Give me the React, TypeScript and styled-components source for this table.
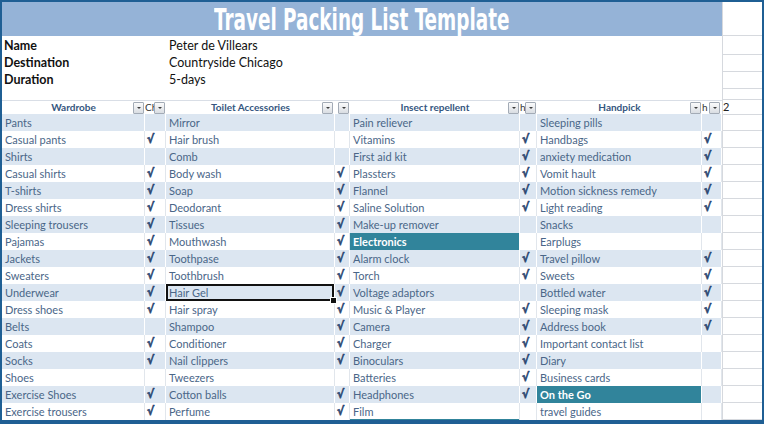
import React from "react";
import styled, { createGlobalStyle, css } from "styled-components";

const GlobalStyle = createGlobalStyle`
  html, body { margin: 0; padding: 0; background: #ffffff; }
  body { font-family: Lato, "Liberation Sans", sans-serif; }
`;

const COLS = "143px 21px 169px 15px 170px 17px 165px 20px 40px";
const GRIDLINE = "#d6d9de";
const BAND = "#dce6f1";
const TEAL = "#31849b";
const TEXT = "#4a6688";

const Frame = styled.div`
  width: 764px;
  height: 424px;
  box-sizing: border-box;
  border: 2px solid #1f5f94;
  border-bottom-width: 4px;
  display: flex;
  flex-direction: column;
  overflow: hidden;
  background: #ffffff;
`;

const Row = styled.div<{ $h: number }>`
  display: grid;
  grid-template-columns: ${COLS};
  height: ${(p) => p.$h}px;
  flex: none;
`;

const TitleBar = styled.div`
  grid-column: 1 / 9;
  background: #95b3d7;
  display: flex;
  align-items: center;
  justify-content: center;
  overflow: hidden;
`;

const TitleText = styled.h1`
  margin: 0;
  color: #ffffff;
  font-family: "DejaVu Sans Condensed", "DejaVu Sans", sans-serif;
  font-weight: bold;
  font-size: 31px;
  line-height: 34px;
  white-space: nowrap;
  transform: scaleX(0.66);
`;

const Extra = styled.div`
  grid-column: 9;
  box-sizing: border-box;
  border-bottom: 1px solid ${GRIDLINE};
  border-left: 1px solid ${GRIDLINE};
  font-size: 11px;
  color: #222;
  line-height: 14px;
`;

const InfoLabel = styled.div`
  grid-column: 1 / 3;
  font-weight: bold;
  font-size: 12.5px;
  color: #111;
  padding-left: 2px;
  line-height: 19px;
  white-space: nowrap;
`;

const InfoValue = styled.div`
  grid-column: 3 / 9;
  font-size: 12.5px;
  color: #111;
  padding-left: 3px;
  line-height: 19px;
  white-space: nowrap;
`;

const Blank = styled.div`
  grid-column: 1 / 9;
`;

const HeadCell = styled.div<{ $narrow?: boolean }>`
  position: relative;
  box-sizing: border-box;
  border-top: 1px solid #d9dee6;
  overflow: hidden;
  white-space: nowrap;
  font-size: 10px;
  line-height: 13px;
  ${(p) =>
    p.$narrow
      ? css`
          color: #333;
          text-align: left;
        `
      : css`
          color: #355680;
          font-weight: bold;
          text-align: center;
        `}
`;

const DropButton = styled.span<{ $r: number }>`
  position: absolute;
  top: 1px;
  right: ${(p) => p.$r}px;
  width: 11px;
  height: 12px;
  box-sizing: border-box;
  border: 1px solid #a3abb6;
  border-radius: 1px;
  background: linear-gradient(#fbfbfb, #d9dde2);
  display: flex;
  align-items: center;
  justify-content: center;
  &::after {
    content: "";
    border-left: 2.5px solid transparent;
    border-right: 2.5px solid transparent;
    border-top: 2.5px solid #3c3c3c;
  }
`;

const ItemCell = styled.div<{ $band: boolean; $teal?: boolean; $sel?: boolean; $under?: boolean }>`
  position: relative;
  box-sizing: border-box;
  background: ${(p) => (p.$teal ? TEAL : p.$band ? BAND : "#ffffff")};
  border-right: 1px solid ${(p) => (p.$band || p.$teal ? "#ffffff" : "#e1e6ec")};
  color: ${(p) => (p.$teal ? "#ffffff" : TEXT)};
  font-weight: ${(p) => (p.$teal ? "bold" : "normal")};
  font-size: 11px;
  line-height: 17px;
  padding-left: 3px;
  white-space: nowrap;
  ${(p) =>
    p.$sel &&
    css`
      box-shadow: inset 0 0 0 2px #111;
      z-index: 1;
    `}
  ${(p) =>
    p.$under &&
    css`
      box-shadow: inset 0 -1px 0 ${TEAL};
    `}
`;

const FillHandle = styled.span`
  position: absolute;
  right: -3px;
  bottom: -3px;
  width: 5px;
  height: 5px;
  background: #111;
  border: 1px solid #fff;
`;

const CheckCell = styled.div<{ $band: boolean }>`
  box-sizing: border-box;
  background: ${(p) => (p.$band ? BAND : "#ffffff")};
  border-right: 1px solid ${(p) => (p.$band ? "#ffffff" : "#e1e6ec")};
  color: #2a4670;
  font-family: "DejaVu Sans Condensed", "DejaVu Sans", sans-serif;
  font-weight: bold;
  font-size: 12px;
  line-height: 17px;
  padding-left: 2px;
  overflow: hidden;
  -webkit-text-stroke: 0.6px #2a4670;
`;

type Item = [string, boolean];

const wardrobe: Item[] = [
  ["Pants", false],
  ["Casual pants", true],
  ["Shirts", false],
  ["Casual shirts", true],
  ["T-shirts", true],
  ["Dress shirts", true],
  ["Sleeping trousers", true],
  ["Pajamas", true],
  ["Jackets", true],
  ["Sweaters", true],
  ["Underwear", true],
  ["Dress shoes", true],
  ["Belts", false],
  ["Coats", true],
  ["Socks", true],
  ["Shoes", false],
  ["Exercise Shoes", true],
  ["Exercise trousers", true],
];

const toilet: Item[] = [
  ["Mirror", false],
  ["Hair brush", false],
  ["Comb", false],
  ["Body wash", true],
  ["Soap", true],
  ["Deodorant", true],
  ["Tissues", true],
  ["Mouthwash", true],
  ["Toothpase", true],
  ["Toothbrush", true],
  ["Hair Gel", true],
  ["Hair spray", true],
  ["Shampoo", true],
  ["Conditioner", true],
  ["Nail clippers", true],
  ["Tweezers", false],
  ["Cotton balls", true],
  ["Perfume", true],
];

const insect: Item[] = [
  ["Pain reliever", false],
  ["Vitamins", true],
  ["First aid kit", true],
  ["Plassters", true],
  ["Flannel", true],
  ["Saline Solution", true],
  ["Make-up remover", false],
  ["Electronics", false],
  ["Alarm clock", true],
  ["Torch", true],
  ["Voltage adaptors", false],
  ["Music & Player", true],
  ["Camera", true],
  ["Charger", true],
  ["Binoculars", true],
  ["Batteries", true],
  ["Headphones", true],
  ["Film", false],
];

const handpick: Item[] = [
  ["Sleeping pills", false],
  ["Handbags", true],
  ["anxiety medication", true],
  ["Vomit hault", true],
  ["Motion sickness remedy", true],
  ["Light reading", true],
  ["Snacks", false],
  ["Earplugs", false],
  ["Travel pillow", true],
  ["Sweets", true],
  ["Bottled water", true],
  ["Sleeping mask", true],
  ["Address book", true],
  ["Important contact list", false],
  ["Diary", false],
  ["Business cards", false],
  ["On the Go", false],
  ["travel guides", false],
];

const info: [string, string][] = [
  ["Name", "Peter de Villears"],
  ["Destination", "Countryside Chicago"],
  ["Duration", "5-days"],
];

export default function App() {
  return (
    <>
      <GlobalStyle />
      <Frame>
        <Row $h={34}>
          <TitleBar>
            <TitleText>Travel Packing List Template</TitleText>
          </TitleBar>
          <Extra />
        </Row>
        {info.map(([label, value]) => (
          <Row $h={17} key={label}>
            <InfoLabel>{label}</InfoLabel>
            <InfoValue>{value}</InfoValue>
            <Extra />
          </Row>
        ))}
        <Row $h={13}>
          <Blank />
          <Extra />
        </Row>
        <Row $h={14}>
          <HeadCell>
            Wardrobe
            <DropButton $r={1} />
          </HeadCell>
          <HeadCell $narrow>
            Ch
            <DropButton $r={1} />
          </HeadCell>
          <HeadCell>
            Toilet Accessories
            <DropButton $r={2} />
          </HeadCell>
          <HeadCell $narrow>
            <DropButton $r={1} />
          </HeadCell>
          <HeadCell>
            Insect repellent
            <DropButton $r={1} />
          </HeadCell>
          <HeadCell $narrow>
            h
            <DropButton $r={1} />
          </HeadCell>
          <HeadCell>
            Handpick
            <DropButton $r={1} />
          </HeadCell>
          <HeadCell $narrow>
            h
            <DropButton $r={2} />
          </HeadCell>
          <Extra>2</Extra>
        </Row>
        {wardrobe.map((w, i) => {
          const band = i % 2 === 0;
          const t = toilet[i];
          const e = insect[i];
          const g = handpick[i];
          return (
            <Row $h={17} key={w[0]}>
              <ItemCell $band={band}>{w[0]}</ItemCell>
              <CheckCell $band={band}>{w[1] ? "√" : ""}</CheckCell>
              <ItemCell $band={band} $sel={i === 10}>
                {t[0]}
                {i === 10 && <FillHandle />}
              </ItemCell>
              <CheckCell $band={band}>{t[1] ? "√" : ""}</CheckCell>
              <ItemCell $band={band} $teal={i === 7} $under={i === 17}>
                {e[0]}
              </ItemCell>
              <CheckCell $band={band}>{e[1] ? "√" : ""}</CheckCell>
              <ItemCell $band={band} $teal={i === 16}>
                {g[0]}
              </ItemCell>
              <CheckCell $band={band}>{g[1] ? "√" : ""}</CheckCell>
              <Extra />
            </Row>
          );
        })}
      </Frame>
    </>
  );
}
